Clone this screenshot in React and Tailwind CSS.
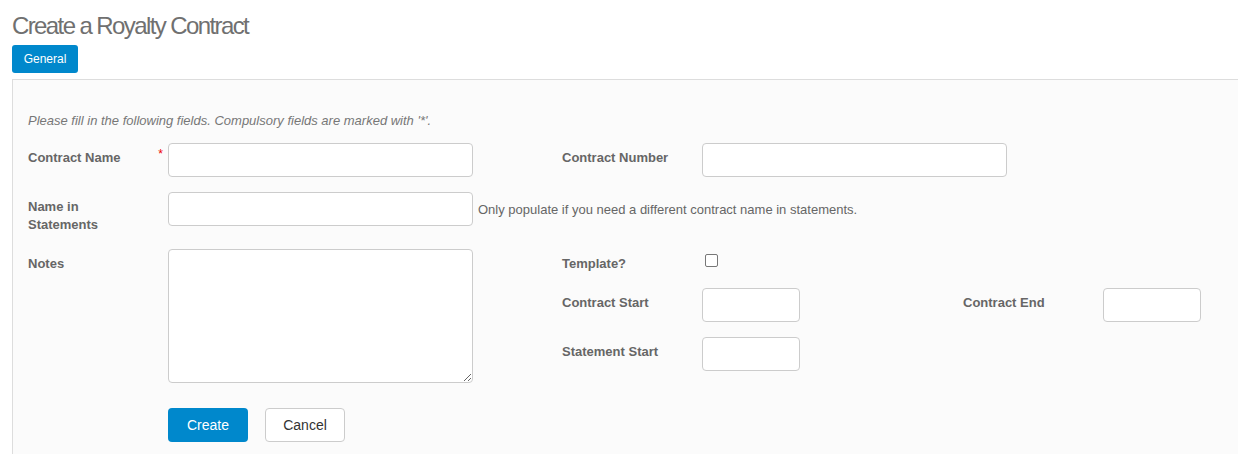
import React from 'react'

const inputCls = "h-[34px] bg-white border border-[#cccccc] rounded-[4px] outline-none px-2 text-[13px]"

function Label({ children, required }) {
  return (
    <div className="w-[140px] shrink-0 flex justify-between items-start pt-[6px] pr-[5px]">
      <span className="text-[13px] leading-[18px] font-bold text-[#666666] w-[115px]">{children}</span>
      {required && <span className="text-[12px] leading-none text-[#ee0000] -mt-[1px]">*</span>}
    </div>
  )
}

function App() {
  return (
    <div className="min-h-[454px] bg-white font-['Liberation_Sans',Arial,sans-serif] overflow-hidden">
      <h1 className="pl-[12px] pt-[13px] text-[24px] leading-[26px] tracking-[-1.6px] text-[#707070] font-normal">
        Create a Royalty Contract
      </h1>
      <div className="pl-[12px] mt-[6px]">
        <button className="h-[28px] w-[66px] bg-[#0088cc] rounded-[3px] text-white text-[12px]">General</button>
      </div>
      <div className="ml-[12px] mt-[6px] w-[1300px] border-t border-l border-[#dddddd] bg-[#fbfbfb] pl-[15px] pt-[32px] pb-[20px]">
        <p className="text-[13px] leading-[18px] italic text-[#777777] mb-[13px]">
          Please fill in the following fields. Compulsory fields are marked with '*'.
        </p>

        {/* row 1 */}
        <div className="flex items-start mb-[15px]">
          <Label required>Contract Name</Label>
          <input className={`${inputCls} w-[305px]`} />
          <div className="w-[89px] shrink-0" />
          <Label>Contract Number</Label>
          <input className={`${inputCls} w-[305px]`} />
        </div>

        {/* row 2 */}
        <div className="flex items-start mb-[15px]">
          <Label>Name in Statements</Label>
          <input className={`${inputCls} w-[305px]`} />
          <span className="ml-[5px] pt-[9px] text-[13px] leading-[18px] text-[#666666]">
            Only populate if you need a different contract name in statements.
          </span>
        </div>

        {/* row 3 */}
        <div className="flex items-start mb-[25px]">
          <Label>Notes</Label>
          <textarea className="w-[305px] h-[134px] bg-white border border-[#cccccc] rounded-[4px] outline-none p-2 text-[13px]" />
          <div className="w-[89px] shrink-0" />
          <div className="flex flex-col">
            <div className="flex items-start mb-[15px]">
              <Label>Template?</Label>
              <input type="checkbox" className="appearance-none w-[13px] h-[13px] mt-[5px] ml-[3px] border border-[#777777] rounded-[2px] bg-white" />
            </div>
            <div className="flex items-start mb-[15px]">
              <Label>Contract Start</Label>
              <input className={`${inputCls} w-[98px]`} />
              <div className="w-[163px] shrink-0" />
              <Label>Contract End</Label>
              <input className={`${inputCls} w-[98px]`} />
            </div>
            <div className="flex items-start">
              <Label>Statement Start</Label>
              <input className={`${inputCls} w-[98px]`} />
            </div>
          </div>
        </div>

        <div className="flex gap-[17px] pl-[140px]">
          <button className="w-[80px] h-[34px] bg-[#0088cc] rounded-[4px] text-white text-[14px]">Create</button>
          <button className="w-[80px] h-[34px] bg-white border border-[#cccccc] rounded-[4px] text-[#333333] text-[14px]">Cancel</button>
        </div>
      </div>
    </div>
  )
}

export default App
